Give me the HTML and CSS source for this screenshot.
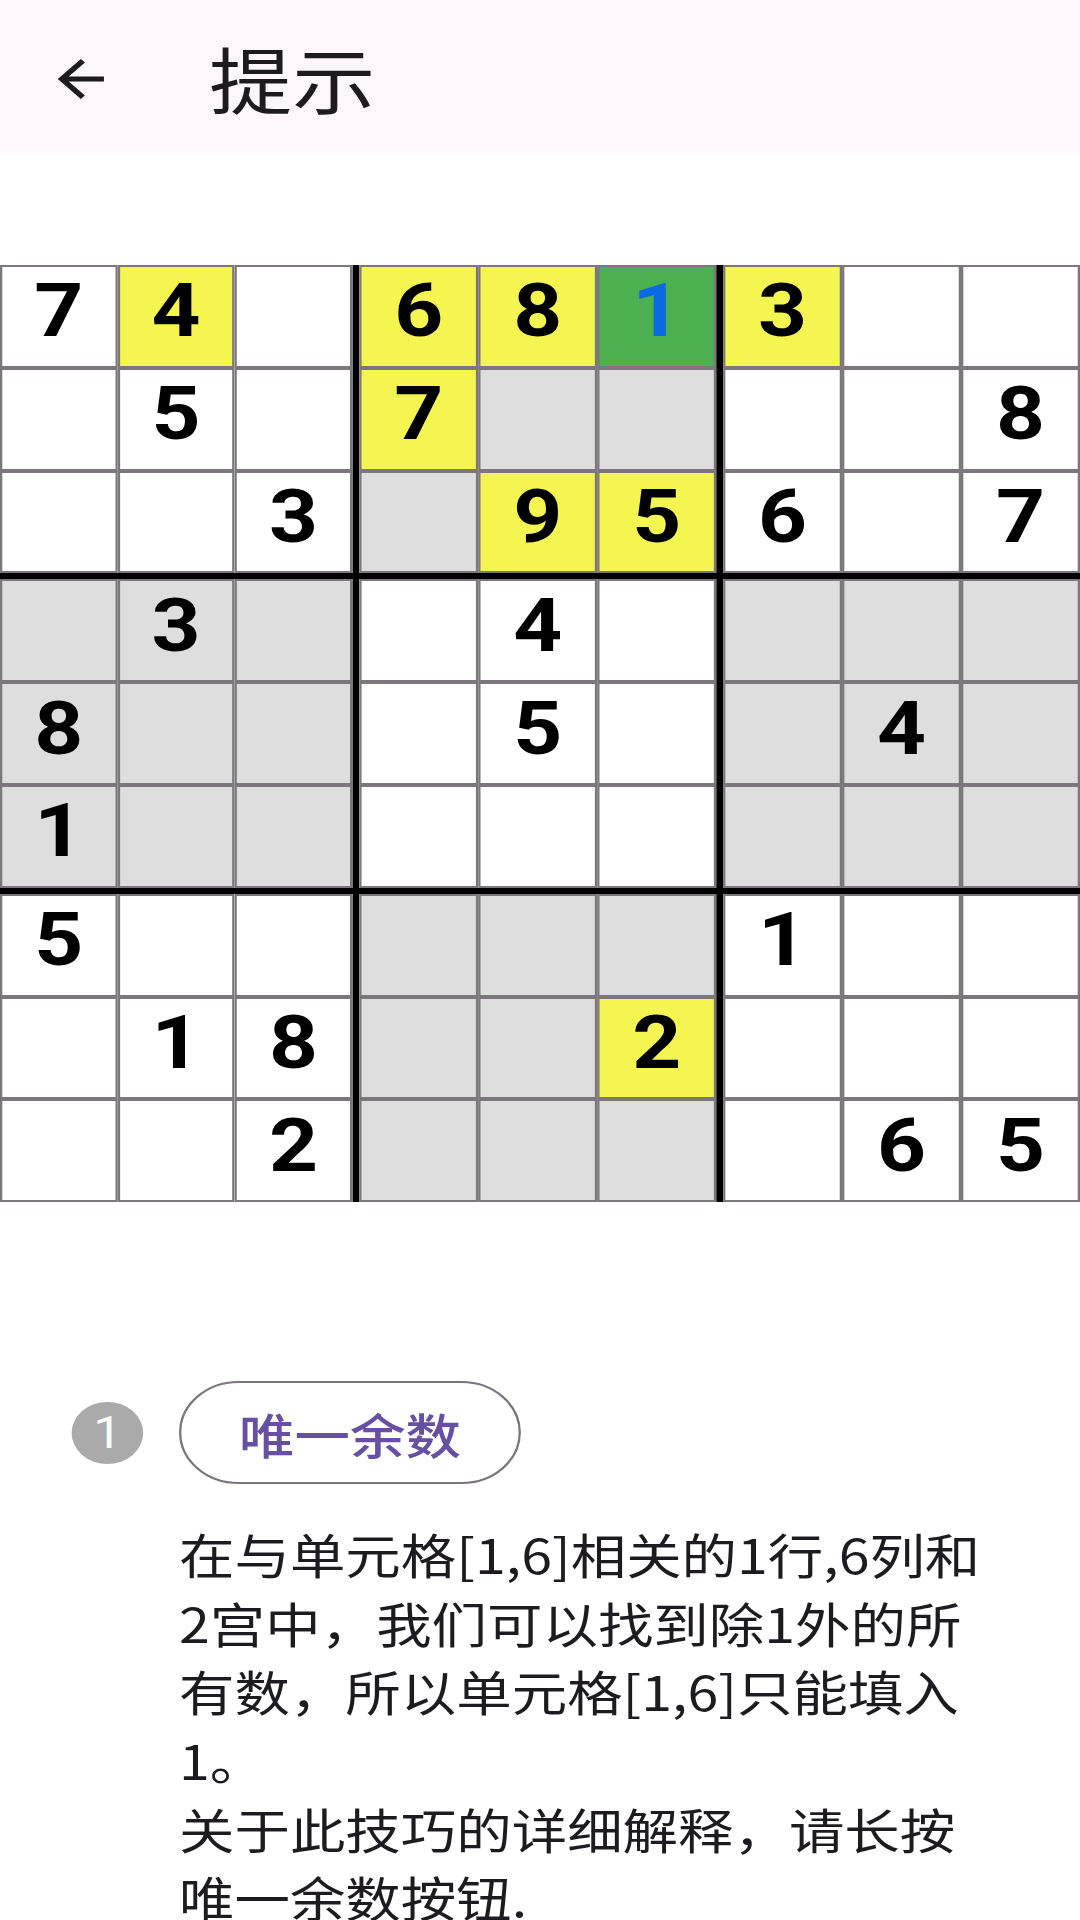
FILE: index.html
```html
<!DOCTYPE html>
<html lang="zh-CN">
<head>
    <meta charset="UTF-8">
    <title>提示</title>
    <link rel="stylesheet" href="styles.css">
</head>
<body>
<div class="screen">
    <div class="topbar">
        <svg class="back" viewBox="0 0 24 24" width="60" height="60">
            <path d="M20 11H7.83l5.59-5.59L12 4l-8 8 8 8 1.41-1.41L7.83 13H20v-2z" fill="#1d1b20"/>
        </svg>
        <div class="title">提示</div>
    </div>

    <div class="board">
        <div class="box">
            <div class="cell">7</div>
            <div class="cell hl">4</div>
            <div class="cell"></div>
            <div class="cell"></div>
            <div class="cell">5</div>
            <div class="cell"></div>
            <div class="cell"></div>
            <div class="cell"></div>
            <div class="cell">3</div>
        </div>
        <div class="box">
            <div class="cell hl">6</div>
            <div class="cell hl">8</div>
            <div class="cell target">1</div>
            <div class="cell hl">7</div>
            <div class="cell unit"></div>
            <div class="cell unit"></div>
            <div class="cell unit"></div>
            <div class="cell hl">9</div>
            <div class="cell hl">5</div>
        </div>
        <div class="box">
            <div class="cell hl">3</div>
            <div class="cell"></div>
            <div class="cell"></div>
            <div class="cell"></div>
            <div class="cell"></div>
            <div class="cell">8</div>
            <div class="cell">6</div>
            <div class="cell"></div>
            <div class="cell">7</div>
        </div>
        <div class="box">
            <div class="cell unit"></div>
            <div class="cell unit">3</div>
            <div class="cell unit"></div>
            <div class="cell unit">8</div>
            <div class="cell unit"></div>
            <div class="cell unit"></div>
            <div class="cell unit">1</div>
            <div class="cell unit"></div>
            <div class="cell unit"></div>
        </div>
        <div class="box">
            <div class="cell"></div>
            <div class="cell">4</div>
            <div class="cell"></div>
            <div class="cell"></div>
            <div class="cell">5</div>
            <div class="cell"></div>
            <div class="cell"></div>
            <div class="cell"></div>
            <div class="cell"></div>
        </div>
        <div class="box">
            <div class="cell unit"></div>
            <div class="cell unit"></div>
            <div class="cell unit"></div>
            <div class="cell unit"></div>
            <div class="cell unit">4</div>
            <div class="cell unit"></div>
            <div class="cell unit"></div>
            <div class="cell unit"></div>
            <div class="cell unit"></div>
        </div>
        <div class="box">
            <div class="cell">5</div>
            <div class="cell"></div>
            <div class="cell"></div>
            <div class="cell"></div>
            <div class="cell">1</div>
            <div class="cell">8</div>
            <div class="cell"></div>
            <div class="cell"></div>
            <div class="cell">2</div>
        </div>
        <div class="box">
            <div class="cell unit"></div>
            <div class="cell unit"></div>
            <div class="cell unit"></div>
            <div class="cell unit"></div>
            <div class="cell unit"></div>
            <div class="cell hl">2</div>
            <div class="cell unit"></div>
            <div class="cell unit"></div>
            <div class="cell unit"></div>
        </div>
        <div class="box">
            <div class="cell">1</div>
            <div class="cell"></div>
            <div class="cell"></div>
            <div class="cell"></div>
            <div class="cell"></div>
            <div class="cell"></div>
            <div class="cell"></div>
            <div class="cell">6</div>
            <div class="cell">5</div>
        </div>
    </div>

    <div class="hint">
        <div class="hint-head">
            <div class="step">1</div>
            <div class="technique">唯一余数</div>
        </div>
        <p class="hint-text">在与单元格[1,6]相关的1行,6列和2宫中，我们可以找到除1外的所有数，所以单元格[1,6]只能填入1。<br>关于此技巧的详细解释，请长按唯一余数按钮.</p>
    </div>
</div>
</body>
</html>
```

FILE: styles.css
```css
html{
    height: 100%;
}
body{
    margin: 0;
    padding: 0;
    width: 1080px;
    height: 1920px;
    overflow: hidden;
    background-color: #ffffff;
    font-family: "Noto Sans CJK SC", "Noto Sans", sans-serif;
    color: #1d1b20;
}
/* the capture is wider than the device, so the whole screen is stretched sideways */
.screen{
    width: 935px;
    transform: scaleX(1.15508);
    transform-origin: 0 0;
}
.topbar{
    display: flex;
    align-items: center;
    height: 153px;
    background-color: #fdf7fd;
}
.back{
    margin-left: 40px;
    margin-top: 4px;
    flex-shrink: 0;
}
.title{
    margin-left: 81px;
    font-size: 72px;
    line-height: 1;
    color: #1d1b20;
}
.board{
    display: grid;
    grid-template-columns: 305px 309px 309px;
    gap: 6px;
    margin-top: 112px;
    background-color: #000000;
}
.box{
    display: grid;
    grid-template-columns: repeat(3, 1fr);
    grid-template-rows: repeat(3, 102.8px);
    background-color: #ffffff;
}
.cell{
    display: flex;
    align-items: center;
    justify-content: center;
    box-sizing: border-box;
    padding-bottom: 10px;
    border: 2.5px solid #7b777d;
    background-color: #ffffff;
    font-family: Roboto, "Liberation Sans", sans-serif;
    font-weight: 700;
    font-size: 74px;
    line-height: 1;
    color: #000000;
}
.hl{
    background-color: #f5f552;
}
.unit{
    background-color: #dedede;
}
.target{
    background-color: #4caf50;
    color: #0b6ae3;
}
.hint{
    margin-top: 179px;
    padding-left: 62px;
}
.hint-head{
    display: flex;
    align-items: center;
    gap: 31px;
}
.step{
    display: flex;
    align-items: center;
    justify-content: center;
    width: 62px;
    height: 62px;
    border-radius: 50%;
    background-color: #aaaaaa;
    color: #ffffff;
    font-family: Roboto, "Noto Sans", sans-serif;
    font-size: 44px;
    line-height: 1;
}
.technique{
    display: flex;
    align-items: center;
    justify-content: center;
    box-sizing: border-box;
    height: 103px;
    padding: 0 50px;
    border: 2px solid #79747e;
    border-radius: 52px;
    font-size: 48px;
    font-weight: 500;
    color: #6750a4;
}
.hint-text{
    width: 700px;
    margin: 35px 0 0 93px;
    font-size: 48px;
    line-height: 68.6px;
    color: #1d1b20;
}
```
